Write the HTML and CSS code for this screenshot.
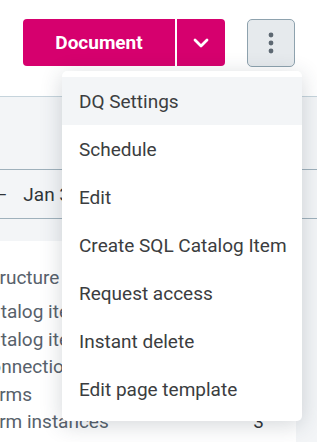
FILE: index.html
```html
<!DOCTYPE html>
<html lang="en">
  <head>
    <meta charset="UTF-8" />
    <meta name="viewport" content="width=device-width, initial-scale=1.0" />
    <title>Document actions</title>
    <link rel="stylesheet" href="styles.css">
  </head>
  <body>
    <!-- Header start -->
    <div class="page-header">
      <div class="split-button">
        <button class="split-main">Document</button>
        <button class="split-toggle">
          <svg width="16" height="10" viewBox="0 0 16 10">
            <path d="M2 2l6 6 6-6" fill="none" stroke="#fff" stroke-width="2.8" stroke-linecap="round" stroke-linejoin="round" />
          </svg>
        </button>
      </div>
      <button class="kebab-button">
        <svg width="8" height="24" viewBox="0 0 8 24">
          <circle cx="4" cy="4" r="2.4" fill="#5d6872" />
          <circle cx="4" cy="12" r="2.4" fill="#5d6872" />
          <circle cx="4" cy="20" r="2.4" fill="#5d6872" />
        </svg>
      </button>
    </div>
    <!-- Header end -->

    <div class="page-content">
      <div class="date-range">
        <span class="date-from">Jan 1, 2024</span>
        <span class="date-dash">–</span>
        <span>Jan 31, 2024</span>
      </div>

      <div class="summary-card">
        <div class="summary-title">Structure</div>
        <div class="summary-row"><span>Catalog items</span><span class="count">12</span></div>
        <div class="summary-row"><span>Catalog item types</span><span class="count">4</span></div>
        <div class="summary-row"><span>Connections</span><span class="count">2</span></div>
        <div class="summary-row"><span>Forms</span><span class="count">5</span></div>
        <div class="summary-row"><span>Form instances</span><span class="count">3</span></div>
      </div>
    </div>

    <!-- Actions menu start -->
    <ul class="actions-menu">
      <li class="menu-item active">DQ Settings</li>
      <li class="menu-item">Schedule</li>
      <li class="menu-item">Edit</li>
      <li class="menu-item">Create SQL Catalog Item</li>
      <li class="menu-item">Request access</li>
      <li class="menu-item">Instant delete</li>
      <li class="menu-item">Edit page template</li>
    </ul>
    <!-- Actions menu end -->
  </body>
</html>
```

FILE: styles.css
```css
* {
  margin: 0;
  padding: 0;
  box-sizing: border-box;
}
body {
  width: 317px;
  height: 442px;
  overflow: hidden;
  position: relative;
  font-family: Roboto, "Liberation Sans", sans-serif;
  font-size: 19px;
  background-color: #f3f5f7;
}
.page-header {
  height: 97px;
  background-color: #fff;
  border-bottom: 1px solid #c6d4dc;
  display: flex;
  align-items: flex-start;
  justify-content: flex-end;
  gap: 22px;
  padding: 19px 22px 0 0;
}
.split-button {
  display: flex;
  gap: 2px;
}
.split-main,
.split-toggle {
  height: 47px;
  border: 0;
  outline: none;
  background-color: #d6006e;
  color: #fff;
  font-family: Roboto, "Liberation Sans", sans-serif;
  font-size: 19px;
  font-weight: 700;
  cursor: pointer;
}
.split-main {
  width: 152px;
  border-radius: 4px 0 0 4px;
}
.split-toggle {
  width: 48px;
  border-radius: 0 4px 4px 0;
  display: flex;
  align-items: center;
  justify-content: center;
}
.kebab-button {
  width: 48px;
  height: 48px;
  border: 1px solid #8ea2ae;
  border-radius: 5px;
  background-color: #e6eaed;
  display: flex;
  align-items: center;
  justify-content: center;
}
.page-content {
  padding-top: 72px;
}
.date-range {
  height: 50px;
  border-top: 1px solid #9fb1bc;
  border-bottom: 1px solid #9fb1bc;
  display: flex;
  align-items: center;
  gap: 16px;
  color: #2f3438;
  white-space: nowrap;
}
.date-from {
  margin-left: -119px;
}
.summary-card {
  margin-top: 22px;
  width: 296px;
  height: 220px;
  background-color: #fff;
  padding-top: 25px;
  padding-right: 32px;
  color: #57616b;
  white-space: nowrap;
}
.summary-title {
  margin-left: -18px;
  height: 32px;
}
.summary-row {
  margin-left: -22px;
  height: 27.5px;
  display: flex;
  justify-content: space-between;
  align-items: center;
}
.count {
  color: #2f3438;
}
.actions-menu {
  position: absolute;
  top: 71px;
  left: 62px;
  width: 240px;
  padding: 6px 0 8px;
  list-style: none;
  background-color: #fff;
  border-radius: 5px;
  box-shadow: 0 4px 22px rgba(40, 55, 70, 0.2);
}
.menu-item {
  height: 48px;
  padding-left: 17px;
  display: flex;
  align-items: center;
  color: #3b3d40;
  white-space: nowrap;
}
.menu-item.active {
  background-color: #f3f5f7;
}
```
